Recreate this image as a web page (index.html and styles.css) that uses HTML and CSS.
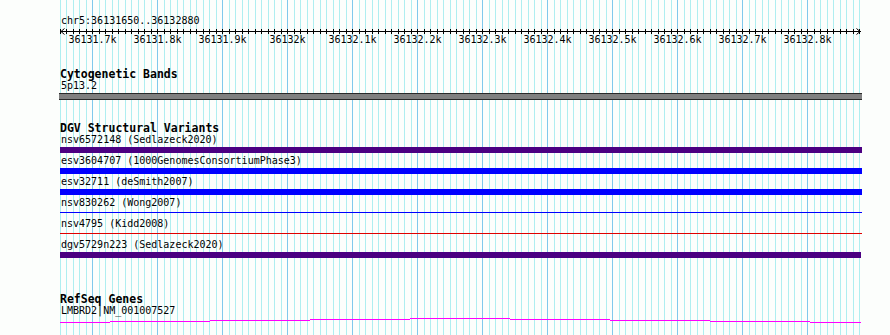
FILE: index.html
```html
<!doctype html>
<html>
  <head>
    <meta charset="utf-8">
    <title>chr5:36131650..36132880</title>
    <link rel="stylesheet" href="styles.css">
  </head>
  <body>
    <div class="view">
      <div class="grid"></div>

      <div class="tracks">
        <div class="locus">chr5:36131650..36132880</div>
        <div class="axis">
          <svg width="802" height="8" viewBox="0 0 802 8">
            <path d="M0 4.5H801 M4.5 1.5L1 4.5L4.5 7.5 M796.5 1.5L800 4.5L796.5 7.5" />
          </svg>
        </div>
        <div class="scale">
          <span>36131.7k</span>
          <span>36131.8k</span>
          <span>36131.9k</span>
          <span>36132k</span>
          <span>36132.1k</span>
          <span>36132.2k</span>
          <span>36132.3k</span>
          <span>36132.4k</span>
          <span>36132.5k</span>
          <span>36132.6k</span>
          <span>36132.7k</span>
          <span>36132.8k</span>
        </div>

        <section class="track cyto">
          <h2>Cytogenetic Bands</h2>
          <div class="feature">
            <div class="label">5p13.2</div>
            <div class="bar band"></div>
          </div>
        </section>

        <section class="track dgv">
          <h2>DGV Structural Variants</h2>
          <div class="feature">
            <div class="label">nsv6572148 (Sedlazeck2020)</div>
            <div class="bar purple"></div>
          </div>
          <div class="feature">
            <div class="label">esv3604707 (1000GenomesConsortiumPhase3)</div>
            <div class="bar blue"></div>
          </div>
          <div class="feature">
            <div class="label">esv32711 (deSmith2007)</div>
            <div class="bar blue"></div>
          </div>
          <div class="feature">
            <div class="label">nsv830262 (Wong2007)</div>
            <div class="bar thin blue"></div>
          </div>
          <div class="feature">
            <div class="label">nsv4795 (Kidd2008)</div>
            <div class="bar thin red"></div>
          </div>
          <div class="feature">
            <div class="label">dgv5729n223 (Sedlazeck2020)</div>
            <div class="bar purple last"></div>
          </div>
        </section>

        <section class="track refseq">
          <h2>RefSeq Genes</h2>
          <div class="feature">
            <div class="label">LMBRD2|NM_001007527</div>
            <svg class="gene" width="802" height="8" viewBox="0 0 802 8">
              <path d="M0 5.5H50 M50 4.5H150 M150 3.5H250 M250 2.5H350 M350 1.5H450 M450 2.5H550 M550 3.5H650 M650 4.5H750 M750 5.5H801" />
            </svg>
          </div>
        </section>
      </div>
    </div>
  </body>
</html>
```

FILE: styles.css
```css
body {
  margin: 0;
  background: #fcfefc;
  font-family: "DejaVu Sans Mono", monospace;
  font-size: 10px;
  line-height: 12px;
  color: #000;
}
.view {
  position: relative;
  height: 335px;
  overflow: hidden;
}
/* 10bp minor lines, 100bp major lines */
.grid {
  position: absolute;
  left: 60px;
  top: 0;
  width: 800px;
  height: 100%;
  background-image:
    linear-gradient(to right, #80c8ec 0 1px, transparent 1px),
    linear-gradient(to right, #aeeef0 0 1px, transparent 1px),
    linear-gradient(to right, #aeeef0 0 1px, transparent 1px);
  background-size: 65px 100%, 13px 100%, 13px 100%;
  background-position: 32px 0, 0 0, 6px 0;
}
.tracks {
  position: relative;
  padding-left: 60px;
}
.locus {
  margin-top: 15px;
  padding-left: 1px;
}
.axis {
  width: 802px;
  height: 8px;
  margin-top: 0;
  margin-bottom: -1px;
  background-image:
    linear-gradient(to right, #000 0 1px, transparent 1px),
    linear-gradient(to right, #000 0 1px, transparent 1px);
  background-size: 13px 5px, 13px 5px;
  background-position: 0 2px, 6px 2px;
  background-repeat: repeat-x;
  width: 800px;
}
.axis svg {
  display: block;
  overflow: visible;
}
.axis path {
  fill: none;
  stroke: #000;
  stroke-width: 1;
}
.scale {
  display: flex;
}
.scale span {
  flex: 0 0 65px;
  text-align: center;
}
.track h2 {
  margin: 0;
  font-size: 11.5px;
  line-height: 12px;
  font-weight: bold;
}
.cyto {
  margin-top: 22px;
}
.dgv {
  margin-top: 22px;
}
.refseq {
  margin-top: 36px;
}
.refseq h2 {
  line-height: 11px;
}
.label {
  padding-left: 1px;
  white-space: nowrap;
}
.bar {
  width: 802px;
  height: 6px;
  margin: 1px 0 2px;
}
.bar.band {
  box-sizing: border-box;
  height: 7px;
  width: 803px;
  margin-left: -1px;
  background: #808080;
  border-top: 1px solid #2a2a2a;
  border-bottom: 1px solid #2a2a2a;
  margin-bottom: 0;
}
.bar.purple {
  background: #4b0082;
}
.bar.blue {
  background: #0000ff;
}
.bar.red {
  background: #e00000;
}
.bar.thin {
  height: 1px;
  margin: 3px 0 5px;
}
.bar.last {
  width: 801px;
}
.gene {
  display: block;
}
.gene path {
  fill: none;
  stroke: #ff00ff;
  stroke-width: 1;
}
```
